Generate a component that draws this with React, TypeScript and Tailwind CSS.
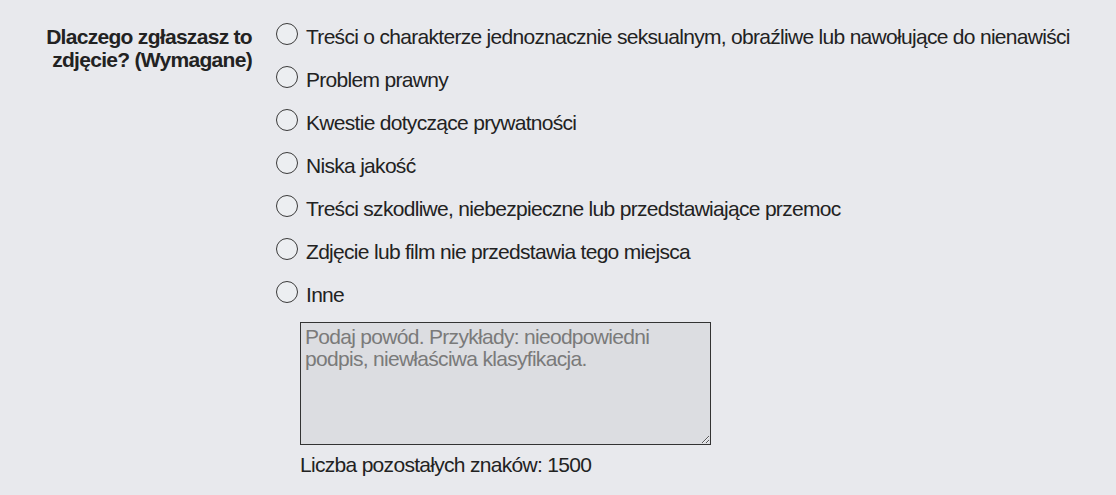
const reasons = [
  "Treści o charakterze jednoznacznie seksualnym, obraźliwe lub nawołujące do nienawiści",
  "Problem prawny",
  "Kwestie dotyczące prywatności",
  "Niska jakość",
  "Treści szkodliwe, niebezpieczne lub przedstawiające przemoc",
  "Zdjęcie lub film nie przedstawia tego miejsca",
  "Inne",
];

function Radio({ label }: { label: string }) {
  return (
    <label className="flex items-start h-[43px] cursor-pointer">
      <span className="mt-[1px] w-[22px] h-[22px] shrink-0 rounded-full border border-[#3a3a3a] bg-[#eceef1]" />
      <span className="ml-[8px] mt-[4px] leading-[22px] text-[#222]">{label}</span>
    </label>
  );
}

export default function App() {
  return (
    <div
      className="w-[1116px] h-[495px] bg-[#e8e9ed] text-[21px] tracking-[-0.7px] text-[#222] overflow-hidden"
      style={{ fontFamily: '"Liberation Sans", Arial, sans-serif' }}
    >
      <div className="flex pt-[22px]">
        <div className="w-[252px] shrink-0 text-right font-bold leading-[23px] pt-[3px] text-[#222]">
          Dlaczego zgłaszasz to
          <br />
          zdjęcie? (Wymagane)
        </div>
        <div className="ml-[24px] flex flex-col">
          {reasons.map((r) => (
            <Radio key={r} label={r} />
          ))}
          <div className="ml-[24px] mt-[-1px]">
            <textarea
              className="block w-[411px] h-[123px] bg-[#dcdde1] border border-[#333] px-[4px] py-[3px] leading-[22px] tracking-[-0.7px] text-[#222] placeholder:text-[#7a7a7a] resize"
              placeholder="Podaj powód. Przykłady: nieodpowiedni podpis, niewłaściwa klasyfikacja."
            />
            <div className="mt-[9px] leading-[22px]">Liczba pozostałych znaków: 1500</div>
          </div>
        </div>
      </div>
    </div>
  );
}
